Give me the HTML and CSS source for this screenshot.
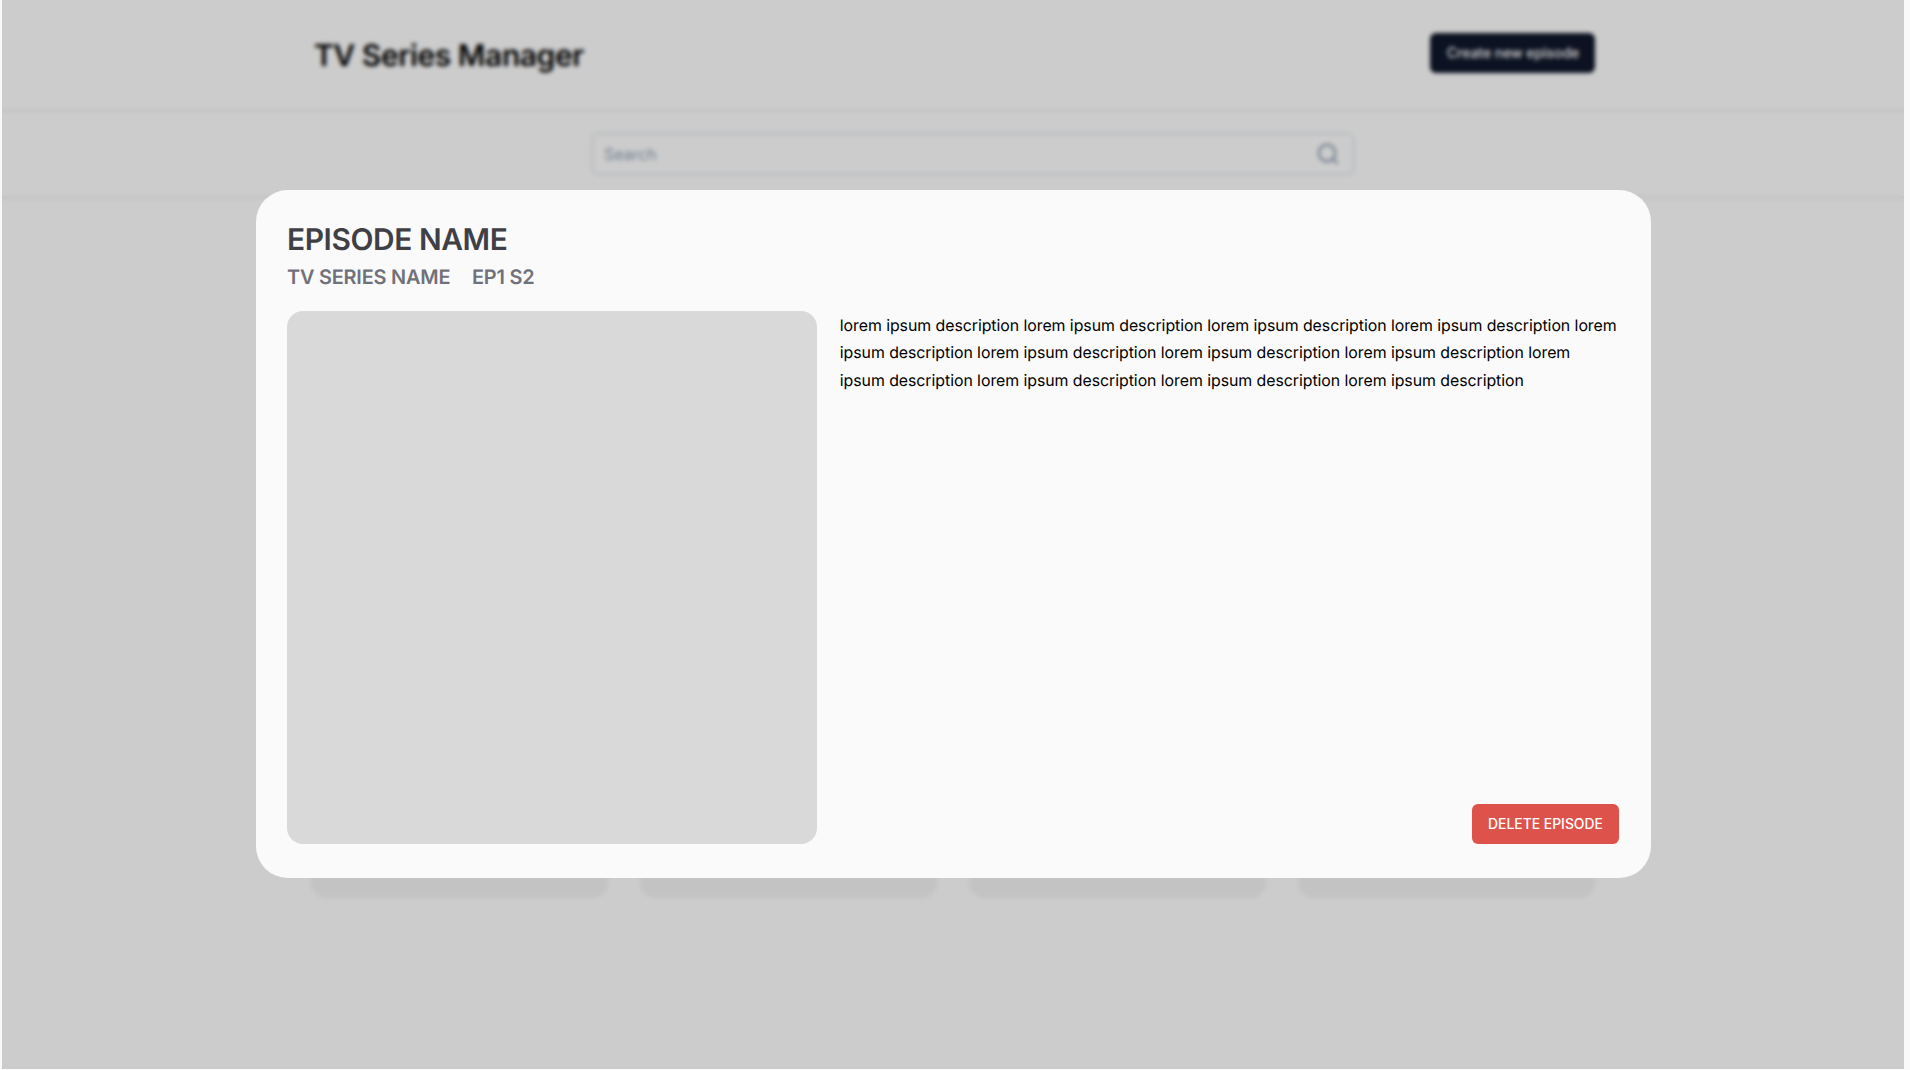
FILE: index.html
```html
<!DOCTYPE html>
<html lang="en">
<head>
<meta charset="utf-8">
<title>TV Series Manager</title>
<link rel="stylesheet" href="styles.css">
</head>
<body>
<div class="app">
  <header class="header">
    <h1 class="brand">TV Series Manager</h1>
    <button class="create">Create new episode</button>
  </header>
  <div class="toolbar">
    <div class="search">
      <span>Search</span>
      <svg class="search-icon" viewBox="0 0 24 24" fill="none" stroke="#94a3b8" stroke-width="2.4" stroke-linecap="round" stroke-linejoin="round"><circle cx="11" cy="11" r="8.2"/><path d="M21 21l-4.3-4.3"/></svg>
    </div>
  </div>
  <main class="grid">
    <div class="card"></div>
    <div class="card"></div>
    <div class="card"></div>
    <div class="card"></div>
  </main>
  <div class="overlay">
    <section class="modal" role="dialog">
      <h2 class="title">EPISODE NAME</h2>
      <div class="meta"><span>TV SERIES NAME</span><span>EP1 S2</span></div>
      <div class="content">
        <div class="poster"></div>
        <div class="details">
          <p class="description">lorem ipsum description lorem ipsum description lorem ipsum description lorem ipsum description lorem<br>ipsum description lorem ipsum description lorem ipsum description lorem ipsum description lorem<br>ipsum description lorem ipsum description lorem ipsum description lorem ipsum description</p>
          <button class="delete">DELETE EPISODE</button>
        </div>
      </div>
    </section>
  </div>
</div>
</body>
</html>
```
FILE: styles.css
```css
* { box-sizing: border-box; }
body {
  margin: 0;
  height: 1070px;
  padding: 0 6px 1px 2px;
  background: #f9f9f9;
  font-family: Inter, sans-serif;
  text-rendering: geometricPrecision;
  overflow: hidden;
}
h1, h2, p { margin: 0; }
button { border: 0; padding: 0; font-family: inherit; }
.app {
  position: relative;
  height: 1069px;
  background: #fff;
  overflow: hidden;
}
.header {
  display: flex;
  justify-content: space-between;
  align-items: flex-start;
  height: 111px;
  padding: 33px 309px 0 312px;
  border-bottom: 1px solid #e4e4e7;
}
.brand {
  font-size: 30px;
  line-height: 36px;
  font-weight: 600;
  letter-spacing: -0.44px;
  margin-top: 5px;
  color: #000;
}
.create {
  width: 165px;
  height: 40px;
  padding-left: 1px;
  border-radius: 6px;
  background: #0f172a;
  color: #fff;
  font-size: 13.9px;
  font-weight: 500;
}
.toolbar {
  height: 87px;
  padding: 22px 0 0 590px;
  border-bottom: 1px solid #e4e4e7;
}
.search {
  display: flex;
  align-items: center;
  justify-content: space-between;
  width: 762px;
  height: 42px;
  padding: 0 13px 0 11px;
  border: 1px solid #cbd5e1;
  border-radius: 6px;
  color: #94a3b8;
  font-size: 15.8px;
}
.search-icon { width: 24px; height: 24px; }
.grid {
  display: grid;
  grid-template-columns: repeat(4, 1fr);
  gap: 32.5px;
  height: 700px;
  padding: 0 309.5px 0 309px;
}
.card { background: #f4f4f5; border-radius: 16px; }
.overlay {
  position: absolute;
  inset: 0;
  padding: 189.7px 0 0 253.5px;
  background: rgba(0, 0, 0, 0.2);
  backdrop-filter: blur(2px);
}
.modal {
  width: 1395px;
  height: 688.3px;
  padding: 32px 31.5px;
  border-radius: 32px;
  background: #fafafa;
}
.title {
  font-size: 29.9px;
  line-height: 36px;
  font-weight: 600;
  letter-spacing: -0.41px;
  color: #3f3f46;
}
.meta {
  display: flex;
  gap: 21.8px;
  margin-top: 5px;
  font-size: 19.9px;
  line-height: 28px;
  font-weight: 600;
  letter-spacing: -0.2px;
  color: #71717a;
}
.content {
  display: flex;
  gap: 22.8px;
  height: 533px;
  margin-top: 20px;
}
.poster {
  flex: 0 0 530px;
  border-radius: 16px;
  background: #d9d9d9;
}
.details {
  flex: 1;
  min-width: 0;
  display: flex;
  flex-direction: column;
  justify-content: space-between;
  align-items: flex-end;
}
.description {
  width: 100%;
  padding-top: 1px;
  white-space: nowrap;
  font-size: 15.88px;
  line-height: 27.8px;
  letter-spacing: -0.055px;
  color: #000;
}
.delete {
  width: 147px;
  height: 39.5px;
  border-radius: 6px;
  background: #de524c;
  color: #fff;
  font-size: 13.9px;
  font-weight: 500;
}
```
